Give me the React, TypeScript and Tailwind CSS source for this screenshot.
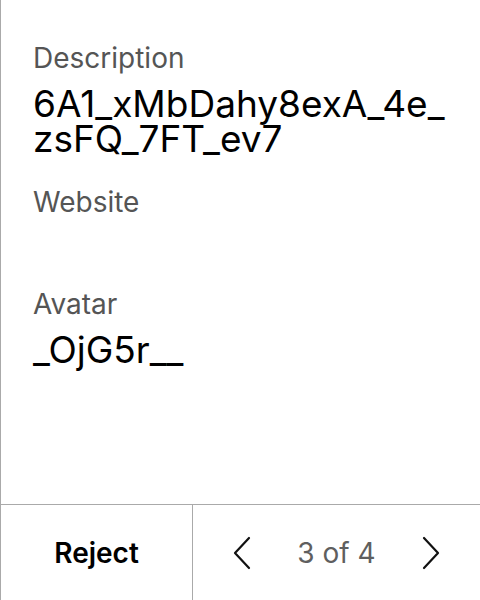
import React from 'react';

const fields = [
    { label: 'Description', value: '6A1_xMbDahy8exA_4e_ zsFQ_7FT_ev7' },
    { label: 'Website', value: '' },
    { label: 'Avatar', value: '_OjG5r__' },
];

const Chevron: React.FC<{ dir: 'left' | 'right' }> = ({ dir }) => (
    <svg width="18" height="34" viewBox="0 0 18 34" fill="none" stroke="#111" strokeWidth="2.2" strokeLinecap="round" strokeLinejoin="round">
        {dir === 'left' ? <polyline points="16,2 2,17 16,32" /> : <polyline points="2,2 16,17 2,32" />}
    </svg>
);

const App: React.FC = () => {
    return (
        <div className="flex flex-col h-[600px] w-[480px] bg-white border-l border-[#aaaaaa] text-black" style={{ fontFamily: 'Inter, "Noto Sans", sans-serif' }}>
            <div className="flex-1 flex flex-col pl-8 pr-6 pt-[41px]">
                {fields.map((f) => (
                    <div key={f.label} className="mb-[29px]">
                        <div className="text-[28px] leading-[34px] text-[#555555]">{f.label}</div>
                        <div className="mt-[11px] min-h-[28px] text-[37px] leading-[35px] break-words">{f.value}</div>
                    </div>
                ))}
            </div>
            <div className="flex h-24 border-t border-[#aaaaaa]">
                <div className="flex w-[192px] items-center justify-center border-r border-[#aaaaaa] text-[28px] font-semibold">
                    Reject
                </div>
                <div className="flex flex-1 items-center justify-center gap-[46px]">
                    <Chevron dir="left" />
                    <span className="text-[28px] text-[#5f5f5f]">3 of 4</span>
                    <Chevron dir="right" />
                </div>
            </div>
        </div>
    );
};

export default App;
